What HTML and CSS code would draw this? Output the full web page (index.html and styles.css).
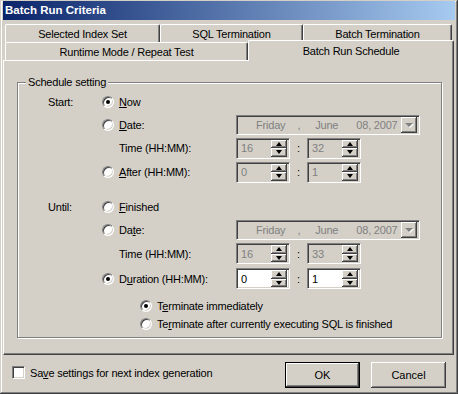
FILE: index.html
```html
<!DOCTYPE html>
<html lang="en">
<head>
  <meta charset="UTF-8" />
  <title>Batch Run Criteria</title>
  <link rel="stylesheet" href="styles.css">
</head>
<body>
  <div class="window">
    <div class="titlebar">Batch Run Criteria</div>

    <div class="tabs">
      <div class="tab-row">
        <div class="tab tab-index">Selected Index Set</div>
        <div class="tab tab-sql">SQL Termination</div>
        <div class="tab tab-batch">Batch Termination</div>
      </div>
      <div class="tab-row">
        <div class="tab tab-runtime">Runtime Mode / Repeat Test</div>
        <div class="tab tab-schedule selected">Batch Run Schedule</div>
      </div>
    </div>

    <div class="panel">
      <div class="group">
        <div class="group-title">Schedule setting</div>
        <div class="schedule">

          <div class="row">
            <span class="lbl">Start:</span>
            <span class="opt"><span class="radio checked"></span><span><u>N</u>ow</span></span>
          </div>
          <div class="row">
            <span class="lbl"></span>
            <span class="opt"><span class="radio"></span><span><u>D</u>ate:</span></span>
            <div class="datepick">
              <span class="d-day">Friday</span>
              <span class="d-comma">,</span>
              <span class="d-month">June</span>
              <span class="d-year">08, 2007</span>
              <span class="drop"><span class="drop-arrow"></span></span>
            </div>
          </div>
          <div class="row row-tall">
            <span class="lbl"></span>
            <span class="opt no-radio">Time (HH:MM):</span>
            <div class="spin"><span class="spin-val">16</span><span class="spin-btns"><span class="spin-btn up"></span><span class="spin-btn down"></span></span></div>
            <span class="colon">:</span>
            <div class="spin"><span class="spin-val">32</span><span class="spin-btns"><span class="spin-btn up"></span><span class="spin-btn down"></span></span></div>
          </div>
          <div class="row row-tall">
            <span class="lbl"></span>
            <span class="opt"><span class="radio"></span><span><u>A</u>fter (HH:MM):</span></span>
            <div class="spin"><span class="spin-val">0</span><span class="spin-btns"><span class="spin-btn up"></span><span class="spin-btn down"></span></span></div>
            <span class="colon">:</span>
            <div class="spin"><span class="spin-val">1</span><span class="spin-btns"><span class="spin-btn up"></span><span class="spin-btn down"></span></span></div>
          </div>

          <div class="row section-start">
            <span class="lbl">Until:</span>
            <span class="opt"><span class="radio"></span><span><u>F</u>inished</span></span>
          </div>
          <div class="row">
            <span class="lbl"></span>
            <span class="opt"><span class="radio"></span><span>Da<u>t</u>e:</span></span>
            <div class="datepick">
              <span class="d-day">Friday</span>
              <span class="d-comma">,</span>
              <span class="d-month">June</span>
              <span class="d-year">08, 2007</span>
              <span class="drop"><span class="drop-arrow"></span></span>
            </div>
          </div>
          <div class="row row-big">
            <span class="lbl"></span>
            <span class="opt no-radio">Time (HH:MM):</span>
            <div class="spin"><span class="spin-val">16</span><span class="spin-btns"><span class="spin-btn up"></span><span class="spin-btn down"></span></span></div>
            <span class="colon">:</span>
            <div class="spin"><span class="spin-val">33</span><span class="spin-btns"><span class="spin-btn up"></span><span class="spin-btn down"></span></span></div>
          </div>
          <div class="row row-big">
            <span class="lbl"></span>
            <span class="opt"><span class="radio checked"></span><span>D<u>u</u>ration (HH:MM):</span></span>
            <div class="spin enabled"><span class="spin-val">0</span><span class="spin-btns"><span class="spin-btn up"></span><span class="spin-btn down"></span></span></div>
            <span class="colon">:</span>
            <div class="spin enabled"><span class="spin-val">1</span><span class="spin-btns"><span class="spin-btn up"></span><span class="spin-btn down"></span></span></div>
          </div>

          <div class="row sub first-sub">
            <span class="radio checked"></span><span>T<u>e</u>rminate immediately</span>
          </div>
          <div class="row sub">
            <span class="radio"></span><span>Te<u>r</u>minate after currently executing SQL is finished</span>
          </div>

        </div>
      </div>
    </div>

    <div class="bottom-bar">
      <label class="save">
        <span class="checkbox"></span>
        <span>Sa<u>v</u>e settings for next index generation</span>
      </label>
      <div class="buttons">
        <button type="button" class="btn default">OK</button>
        <button type="button" class="btn">Cancel</button>
      </div>
    </div>
  </div>
</body>
</html>
```

FILE: styles.css
```css
body {
  margin: 0;
  padding: 0;
  font-family: "Liberation Sans", Arial, sans-serif;
  font-size: 11px;
  letter-spacing: -0.2px;
  color: #000;
  background-color: #d4d0c8;
}

.window {
  width: 458px;
  height: 394px;
  box-sizing: border-box;
  padding: 1px 3px 3px 3px;
  background-color: #d4d0c8;
  box-shadow: inset -1px -1px #404040, inset 1px 1px #d4d0c8,
              inset -2px -2px #808080, inset 2px 2px #fff;
  display: flex;
  flex-direction: column;
}

.titlebar {
  height: 19px;
  line-height: 19px;
  padding-left: 2px;
  font-weight: bold;
  font-size: 11.5px;
  letter-spacing: 0;
  color: #fff;
  background: linear-gradient(to right, #0a246a, #a6caf0);
  margin-bottom: 4px;
}

/* tabs */
.tabs {
  padding-left: 2px;
}

.tab-row {
  display: flex;
  height: 18px;
}

.tab {
  box-sizing: border-box;
  height: 18px;
  display: flex;
  align-items: center;
  justify-content: center;
  white-space: nowrap;
  border-top: 1px solid #fff;
  border-left: 1px solid #fff;
  border-right: 1px solid #404040;
  box-shadow: inset -1px 0 #808080;
  border-radius: 2px 2px 0 0;
  background-color: #d4d0c8;
}

.tab-index { width: 155px; }
.tab-sql { width: 143px; }
.tab-batch { width: 149px; }
.tab-runtime { width: 243px; }
.tab-schedule { width: 206px; }

.tab.selected {
  height: 21px;
  margin-top: -2px;
  position: relative;
  z-index: 1;
}

/* panel */
.panel {
  height: 295px;
  margin-right: 1px;
  box-sizing: border-box;
  border-top: 1px solid #fff;
  border-left: 1px solid #fff;
  border-right: 1px solid #404040;
  border-bottom: 1px solid #404040;
  box-shadow: inset -1px -1px #808080;
  padding: 21px 11px 0 13px;
}

.group {
  border: 1px solid #808080;
  box-shadow: inset 1px 1px #fff, 1px 1px #fff;
  display: flex;
  flex-direction: column;
  height: 256px;
  box-sizing: border-box;
}

.group-title {
  align-self: flex-start;
  height: 13px;
  line-height: 13px;
  margin: -7px 0 0 8px;
  padding: 0 2px;
  background-color: #d4d0c8;
}

.schedule {
  padding: 1px 0 0 30px;
}

.row {
  display: flex;
  align-items: center;
  height: 23px;
  white-space: nowrap;
}

.row-tall { height: 24px; }
.row-big { height: 25px; }

.section-start { margin-top: 11px; }

.lbl {
  width: 54px;
  flex: none;
}

.opt {
  width: 134px;
  flex: none;
  display: flex;
  align-items: center;
}

.opt.no-radio {
  padding-left: 17px;
  box-sizing: border-box;
}

.sub {
  height: 18px;
  padding-left: 92px;
}

.first-sub { margin-top: 6px; }

/* radio + checkbox */
.radio {
  flex: none;
  width: 12px;
  height: 12px;
  box-sizing: border-box;
  border-radius: 50%;
  border: 1px solid;
  border-color: #808080 #fff #fff #808080;
  box-shadow: inset 1px 1px #404040, inset -1px -1px #d4d0c8;
  background-color: #fff;
  margin-right: 5px;
  display: flex;
  align-items: center;
  justify-content: center;
}

.radio.checked::after {
  content: "";
  width: 4px;
  height: 4px;
  border-radius: 50%;
  background-color: #000;
}

.checkbox {
  flex: none;
  width: 13px;
  height: 13px;
  box-sizing: border-box;
  border: 1px solid;
  border-color: #808080 #fff #fff #808080;
  box-shadow: inset 1px 1px #404040, inset -1px -1px #d4d0c8;
  background-color: #fff;
  margin-right: 5px;
}

/* sunken fields */
.datepick,
.spin {
  flex: none;
  box-sizing: border-box;
  border: 1px solid;
  border-color: #808080 #fff #fff #808080;
  box-shadow: inset 1px 1px #404040, inset -1px -1px #d4d0c8;
  background-color: #d4d0c8;
  color: #808080;
  display: flex;
  align-items: center;
  white-space: nowrap;
}

.datepick {
  width: 184px;
  height: 20px;
  padding: 2px;
}

.d-day { margin-left: 17px; }
.d-comma { margin-left: 12px; }
.d-month { margin-left: 15px; }
.d-year { margin-left: 18px; }

.drop {
  flex: none;
  margin-left: auto;
  width: 16px;
  height: 16px;
  box-sizing: border-box;
  box-shadow: inset -1px -1px #404040, inset 1px 1px #fff, inset -2px -2px #808080;
  display: flex;
  align-items: center;
  justify-content: center;
}

.drop-arrow {
  width: 0;
  height: 0;
  border-left: 4px solid transparent;
  border-right: 4px solid transparent;
  border-top: 4px solid #808080;
  filter: drop-shadow(1px 1px 0 #fff);
}

.spin {
  width: 54px;
  height: 21px;
  padding: 2px;
}

.spin.enabled {
  background-color: #fff;
  color: #000;
}

.spin-val {
  flex: 1;
  padding-left: 2px;
}

.spin-btns {
  flex: none;
  width: 16px;
  height: 17px;
  display: flex;
  flex-direction: column;
}

.spin-btn {
  flex: 1;
  background-color: #d4d0c8;
  box-shadow: inset -1px -1px #404040, inset 1px 1px #fff, inset -2px -2px #808080;
  display: flex;
  align-items: center;
  justify-content: center;
}

.spin-btn.up::before {
  content: "";
  border-left: 3px solid transparent;
  border-right: 3px solid transparent;
  border-bottom: 4px solid #000;
}

.spin-btn.down::before {
  content: "";
  border-left: 3px solid transparent;
  border-right: 3px solid transparent;
  border-top: 4px solid #000;
}

.colon {
  width: 17px;
  text-align: center;
}

/* bottom */
.bottom-bar {
  flex: 1;
  display: flex;
  align-items: center;
  justify-content: space-between;
  padding: 4px 9px 0 9px;
}

.save {
  display: flex;
  align-items: center;
  margin-top: -5px;
}

.buttons {
  display: flex;
  gap: 11px;
}

.btn {
  width: 75px;
  height: 26px;
  padding: 0;
  border: none;
  font-family: inherit;
  font-size: 11px;
  color: #000;
  background-color: #d4d0c8;
  box-shadow: inset -1px -1px #404040, inset 1px 1px #fff, inset -2px -2px #808080;
}

.btn.default {
  border: 1px solid #000;
}
```
